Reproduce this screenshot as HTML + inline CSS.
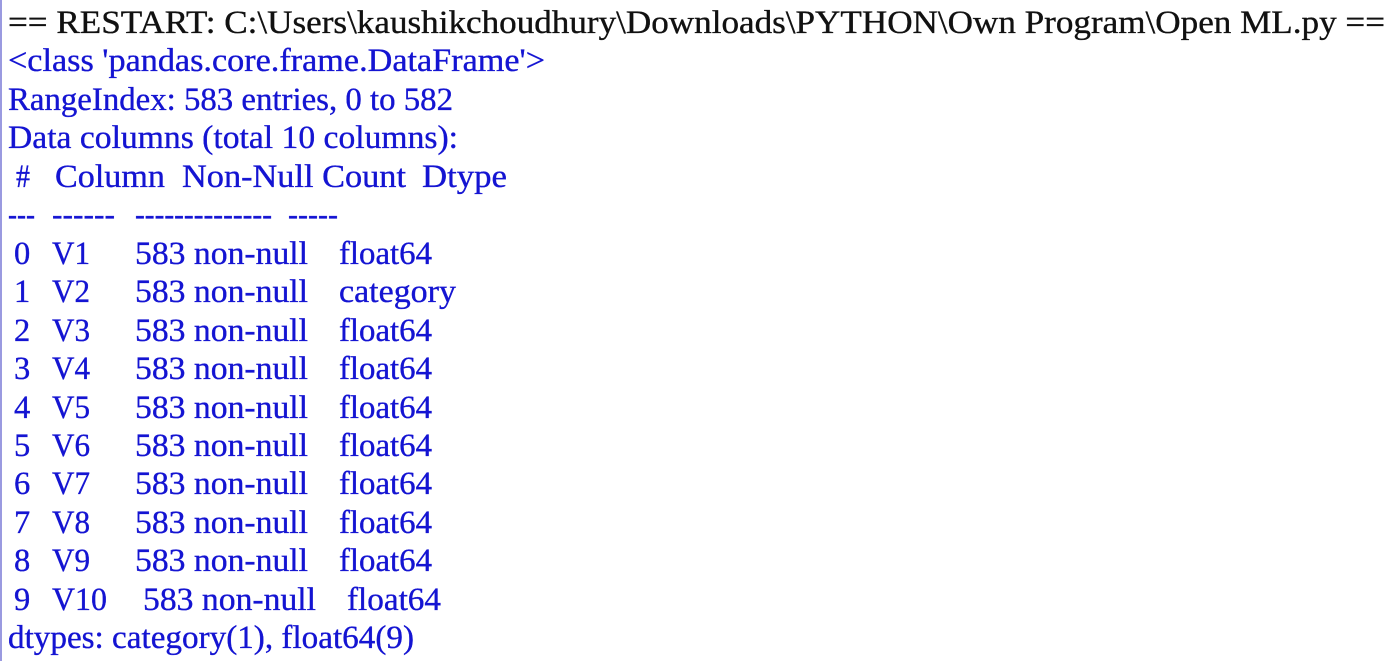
<!DOCTYPE html>
<html><head><meta charset="utf-8"><style>
html,body{margin:0;padding:0;background:#fff;width:1400px;height:661px;overflow:hidden}
svg{display:block}
text{font-family:"Liberation Serif",serif;font-size:32.5px;fill:#1414d2;stroke:#1414d2;stroke-width:0.35}
</style></head><body>
<svg width="1400" height="661" xmlns="http://www.w3.org/2000/svg">
<rect x="0" y="0" width="2" height="661" fill="#9a9ae0"/>
<g>
<text x="8" y="33" textLength="1377" lengthAdjust="spacingAndGlyphs" style="fill:#111;stroke:#111">== RESTART: C:\Users\kaushikchoudhury\Downloads\PYTHON\Own Program\Open ML.py ==</text>
<text x="8" y="71" textLength="537" lengthAdjust="spacingAndGlyphs">&lt;class 'pandas.core.frame.DataFrame'&gt;</text>
<text x="8" y="110" textLength="445" lengthAdjust="spacingAndGlyphs">RangeIndex: 583 entries, 0 to 582</text>
<text x="8" y="148" textLength="450" lengthAdjust="spacingAndGlyphs">Data columns (total 10 columns):</text>
<text x="16" y="187" textLength="14" lengthAdjust="spacingAndGlyphs">#</text>
<text x="55" y="187" textLength="110" lengthAdjust="spacingAndGlyphs">Column</text>
<text x="182" y="187" textLength="224" lengthAdjust="spacingAndGlyphs">Non-Null Count</text>
<text x="422" y="187" textLength="85" lengthAdjust="spacingAndGlyphs">Dtype</text>
<text x="8" y="225" textLength="27" lengthAdjust="spacingAndGlyphs">---</text>
<text x="52" y="225" textLength="63" lengthAdjust="spacingAndGlyphs">------</text>
<text x="135" y="225" textLength="137" lengthAdjust="spacingAndGlyphs">--------------</text>
<text x="288" y="225" textLength="50" lengthAdjust="spacingAndGlyphs">-----</text>
</g>
<g>
<text x="14" y="264">0</text><text x="52" y="264" textLength="38" lengthAdjust="spacingAndGlyphs">V1</text><text x="135" y="264" textLength="173" lengthAdjust="spacingAndGlyphs">583 non-null</text><text x="339" y="264" textLength="93" lengthAdjust="spacingAndGlyphs">float64</text>
<text x="14" y="302">1</text><text x="52" y="302" textLength="38" lengthAdjust="spacingAndGlyphs">V2</text><text x="135" y="302" textLength="173" lengthAdjust="spacingAndGlyphs">583 non-null</text><text x="339" y="302" textLength="117" lengthAdjust="spacingAndGlyphs">category</text>
<text x="14" y="341">2</text><text x="52" y="341" textLength="38" lengthAdjust="spacingAndGlyphs">V3</text><text x="135" y="341" textLength="173" lengthAdjust="spacingAndGlyphs">583 non-null</text><text x="339" y="341" textLength="93" lengthAdjust="spacingAndGlyphs">float64</text>
<text x="14" y="379">3</text><text x="52" y="379" textLength="38" lengthAdjust="spacingAndGlyphs">V4</text><text x="135" y="379" textLength="173" lengthAdjust="spacingAndGlyphs">583 non-null</text><text x="339" y="379" textLength="93" lengthAdjust="spacingAndGlyphs">float64</text>
<text x="14" y="418">4</text><text x="52" y="418" textLength="38" lengthAdjust="spacingAndGlyphs">V5</text><text x="135" y="418" textLength="173" lengthAdjust="spacingAndGlyphs">583 non-null</text><text x="339" y="418" textLength="93" lengthAdjust="spacingAndGlyphs">float64</text>
<text x="14" y="456">5</text><text x="52" y="456" textLength="38" lengthAdjust="spacingAndGlyphs">V6</text><text x="135" y="456" textLength="173" lengthAdjust="spacingAndGlyphs">583 non-null</text><text x="339" y="456" textLength="93" lengthAdjust="spacingAndGlyphs">float64</text>
<text x="14" y="494">6</text><text x="52" y="494" textLength="38" lengthAdjust="spacingAndGlyphs">V7</text><text x="135" y="494" textLength="173" lengthAdjust="spacingAndGlyphs">583 non-null</text><text x="339" y="494" textLength="93" lengthAdjust="spacingAndGlyphs">float64</text>
<text x="14" y="533">7</text><text x="52" y="533" textLength="38" lengthAdjust="spacingAndGlyphs">V8</text><text x="135" y="533" textLength="173" lengthAdjust="spacingAndGlyphs">583 non-null</text><text x="339" y="533" textLength="93" lengthAdjust="spacingAndGlyphs">float64</text>
<text x="14" y="571">8</text><text x="52" y="571" textLength="38" lengthAdjust="spacingAndGlyphs">V9</text><text x="135" y="571" textLength="173" lengthAdjust="spacingAndGlyphs">583 non-null</text><text x="339" y="571" textLength="93" lengthAdjust="spacingAndGlyphs">float64</text>
<text x="14" y="610">9</text><text x="52" y="610" textLength="55" lengthAdjust="spacingAndGlyphs">V10</text><text x="143" y="610" textLength="173" lengthAdjust="spacingAndGlyphs">583 non-null</text><text x="347" y="610" textLength="94" lengthAdjust="spacingAndGlyphs">float64</text>
<text x="8" y="648" textLength="406" lengthAdjust="spacingAndGlyphs">dtypes: category(1), float64(9)</text>
</g>
</svg>
</body></html>
